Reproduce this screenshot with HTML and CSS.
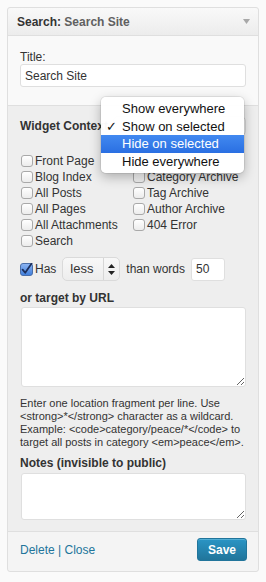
FILE: index.html
```html
<!DOCTYPE html>
<html lang="en">
<head>
    <meta charset="UTF-8">
    <title>Widget: Search</title>
    <link rel="stylesheet" href="styles.css">
</head>
<body>

    <div class="widget">
        <div class="widget-top">
            <h4>Search: <span class="in-title">Search Site</span></h4>
            <svg class="toggle" width="7" height="5" viewBox="0 0 7 5"><path d="M0 0H7L3.5 5Z" fill="#a8a8a8"/></svg>
        </div>

        <div class="widget-main">
            <label class="field-label" for="title">Title:</label>
            <input type="text" class="text-input" id="title" value="Search Site">
        </div>

        <div class="widget-context">
            <div class="context-row">
                <strong>Widget Context</strong>
                <span class="fake-select"></span>
                <ul class="popup-menu">
                    <li>Show everywhere</li>
                    <li><span class="tick">✓</span>Show on selected</li>
                    <li class="active">Hide on selected</li>
                    <li>Hide everywhere</li>
                </ul>
            </div>

            <div class="checks">
                <div class="col">
                    <label class="check"><input type="checkbox">Front Page</label>
                    <label class="check"><input type="checkbox">Blog Index</label>
                    <label class="check"><input type="checkbox">All Posts</label>
                    <label class="check"><input type="checkbox">All Pages</label>
                    <label class="check"><input type="checkbox">All Attachments</label>
                    <label class="check"><input type="checkbox">Search</label>
                </div>
                <div class="col">
                    <span class="check"></span>
                    <label class="check"><input type="checkbox">Category Archive</label>
                    <label class="check"><input type="checkbox">Tag Archive</label>
                    <label class="check"><input type="checkbox">Author Archive</label>
                    <label class="check"><input type="checkbox">404 Error</label>
                </div>
            </div>

            <div class="word-row">
                <label class="check">
                    <span class="checked-box">
                        <svg width="13" height="13" viewBox="0 0 13 13">
                            <defs>
                                <linearGradient id="blue" x1="0" y1="0" x2="0" y2="1">
                                    <stop offset="0" stop-color="#8fb6f2"/>
                                    <stop offset="1" stop-color="#3d7ddc"/>
                                </linearGradient>
                            </defs>
                            <rect x="0.5" y="0.5" width="12" height="12" rx="2.5" fill="url(#blue)" stroke="#4a6ea8"/>
                            <path d="M2.6 6.6L5.2 9.8L11.6 0.6" fill="none" stroke="#1c2f5c" stroke-width="1.8" stroke-linecap="round" stroke-linejoin="round"/>
                        </svg>
                    </span>Has
                </label>
                <span class="mini-select">
                    <span class="value">less</span>
                    <span class="arrows">
                        <svg width="7" height="11" viewBox="0 0 7 11"><path d="M3.5 0L7 4H0Z M0 7H7L3.5 11Z" fill="#222"/></svg>
                    </span>
                </span>
                <span>than words</span>
                <input type="text" class="num-input" value="50">
            </div>

            <p class="label-bold">or target by URL</p>
            <textarea class="url-box"></textarea>

            <p class="help">Enter one location fragment per line. Use<br>&lt;strong&gt;*&lt;/strong&gt; character as a wildcard.<br>Example: &lt;code&gt;category/peace/*&lt;/code&gt; to<br>target all posts in category &lt;em&gt;peace&lt;/em&gt;.</p>

            <p class="label-bold notes-label">Notes (invisible to public)</p>
            <textarea class="notes-box"></textarea>
        </div>

        <div class="widget-control">
            <div class="links"><a href="#">Delete</a> | <a href="#">Close</a></div>
            <button class="save">Save</button>
        </div>
    </div>

</body>
</html>
```

FILE: styles.css
```css
body {
    margin: 0;
    background-color: #fafafa;
    font-family: "Liberation Sans", Arial, sans-serif;
    font-size: 12px;
    color: #333;
}
.widget {
    margin: 7px;
    border: 1px solid #dfdfdf;
    border-radius: 3px;
    background-color: #eeeeee;
}
.widget-top {
    height: 27px;
    display: flex;
    align-items: center;
    justify-content: space-between;
    padding: 0 8px 0 9px;
    background: linear-gradient(#f9f9f9, #ececec);
    border-bottom: 1px solid #dfdfdf;
    border-radius: 3px 3px 0 0;
}
.widget-top h4 {
    margin: 0;
    font-size: 12px;
    font-weight: bold;
    color: #333;
}
.in-title {
    color: #606060;
}
.widget-main {
    background-color: #f9f9f9;
    padding: 14px 12px 18px;
    border-bottom: 1px solid #dfdfdf;
}
.field-label {
    display: block;
    line-height: 14px;
}
.text-input {
    display: block;
    box-sizing: border-box;
    width: 100%;
    height: 23px;
    margin: 0;
    padding: 0 4px;
    border: 1px solid #dfdfdf;
    border-radius: 3px;
    background: #fff;
    font: 12px "Liberation Sans", Arial, sans-serif;
    color: #333;
}
.widget-context {
    padding: 9px 12px 11px;
    border-bottom: 1px solid #dfdfdf;
}
.context-row {
    position: relative;
    display: flex;
    align-items: center;
    height: 22px;
}
.fake-select {
    margin-left: auto;
    width: 133px;
    height: 20px;
    border: 1px solid #d5d5d5;
    border-radius: 5px;
    background: #f4f4f4;
    box-sizing: border-box;
}
.popup-menu {
    position: absolute;
    left: 81px;
    top: -18px;
    width: 143px;
    margin: 0;
    padding: 3px 0 3px;
    list-style: none;
    background: rgba(255, 255, 255, 0.97);
    border-radius: 5px;
    box-shadow: 0 0 0 1px rgba(0, 0, 0, 0.07), 0 4px 12px rgba(0, 0, 0, 0.28);
    font-size: 13px;
    color: #111;
}
.popup-menu li {
    position: relative;
    height: 17.5px;
    line-height: 17.5px;
    padding-left: 21px;
}
.popup-menu li.active {
    background: linear-gradient(#4289f0, #2a6fe2);
    color: #fff;
}
.tick {
    position: absolute;
    left: 5px;
    top: 0;
    font-family: "DejaVu Sans", sans-serif;
    font-size: 13px;
    font-weight: bold;
}
.checks {
    display: flex;
    margin-top: 16px;
}
.col {
    display: flex;
    flex-direction: column;
}
.col:first-child {
    width: 112px;
}
.check {
    display: flex;
    align-items: center;
    height: 16px;
    white-space: nowrap;
}
.check input {
    appearance: none;
    -webkit-appearance: none;
    width: 12px;
    height: 12px;
    margin: 0 2px 0 1px;
    border: 1px solid #a9a9a9;
    border-radius: 3px;
    background: linear-gradient(#ffffff, #ececec);
    box-sizing: border-box;
}
.checked-box {
    display: inline-flex;
    width: 13px;
    height: 13px;
    margin: 0 2px 0 0;
}
.word-row {
    display: flex;
    align-items: center;
    gap: 6px;
    height: 24px;
    margin-top: 8px;
}
.mini-select {
    display: flex;
    width: 58px;
    height: 24px;
    box-sizing: border-box;
    border: 1px solid #dadada;
    border-radius: 5px;
    background: linear-gradient(#f8f8f8, #ededed);
    font-size: 13px;
}
.mini-select .value {
    width: 41px;
    padding-left: 7px;
    line-height: 22px;
    box-sizing: border-box;
    border-right: 1px solid #d6d6d6;
}
.mini-select .arrows {
    flex: 1;
    display: flex;
    align-items: center;
    justify-content: center;
}
.num-input {
    box-sizing: border-box;
    width: 34px;
    height: 23px;
    margin: 0;
    padding: 0 4px;
    border: 1px solid #dfdfdf;
    border-radius: 3px;
    background: #fff;
    font: 12px "Liberation Sans", Arial, sans-serif;
    color: #333;
}
.label-bold {
    margin: 10px 0 2px;
    line-height: 14px;
    font-weight: bold;
}
.url-box,
.notes-box {
    display: block;
    box-sizing: border-box;
    width: 225px;
    margin: 0 0 0 1px;
    border: 1px solid #dfdfdf;
    border-radius: 3px;
    background: #fff;
}
.url-box {
    height: 80px;
}
.notes-box {
    height: 47px;
}
.help {
    margin: 10px 0 0;
    font-size: 11px;
    line-height: 13px;
    color: #333;
}
.notes-label {
    margin: 7px 0 3px;
}
.widget-control {
    display: flex;
    align-items: center;
    justify-content: space-between;
    padding: 6px 11px 10px 12px;
    background-color: #f4f4f4;
    border-radius: 0 0 3px 3px;
}
.links,
.links a {
    color: #21759b;
    text-decoration: none;
}
.save {
    width: 50px;
    height: 23px;
    padding: 0;
    border: 1px solid #21759b;
    border-radius: 3px;
    background: linear-gradient(#2a95c5, #21759b);
    color: #fff;
    font: bold 12px "Liberation Sans", Arial, sans-serif;
    box-shadow: inset 0 1px 0 rgba(120, 200, 230, 0.5);
}
```
